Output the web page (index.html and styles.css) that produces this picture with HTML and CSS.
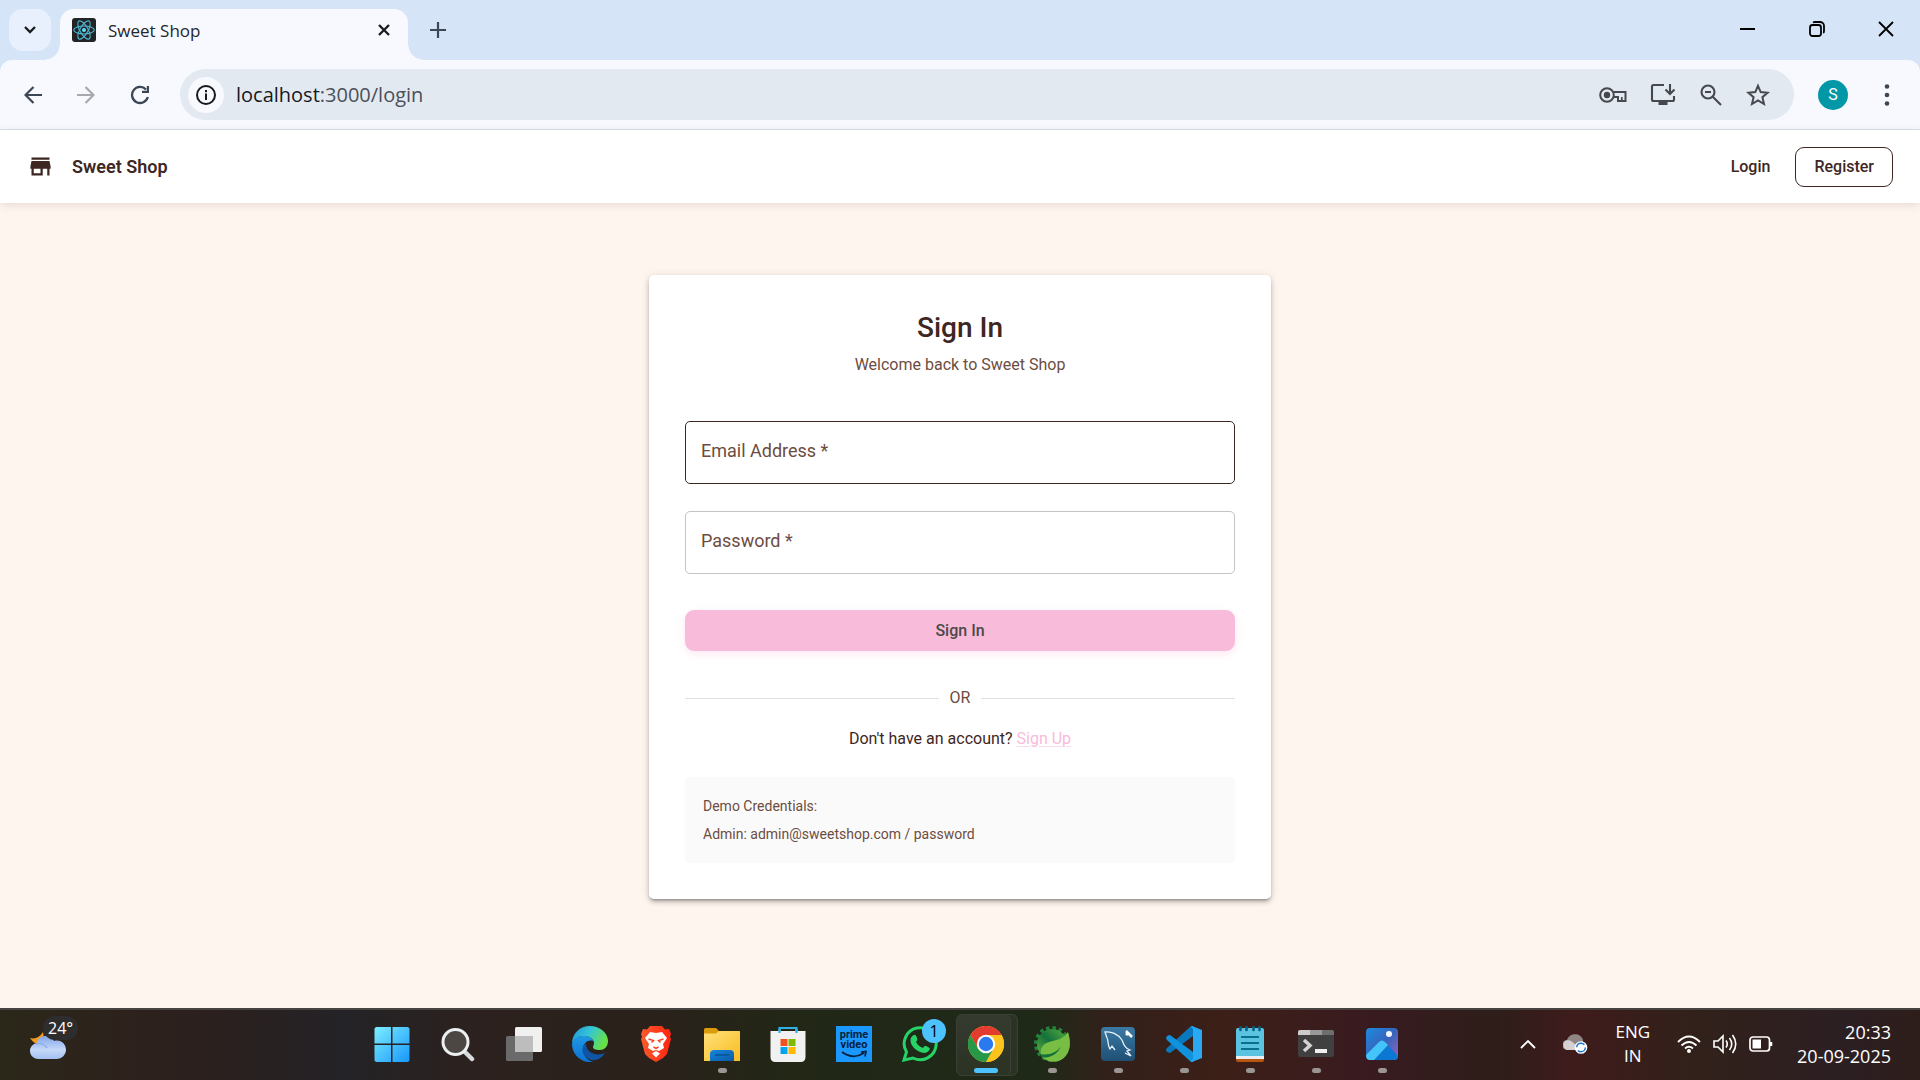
FILE: index.html
```html
<!DOCTYPE html>
<html lang="en">
<head>
<meta charset="utf-8">
<title>Sweet Shop</title>
<link rel="stylesheet" href="styles.css">
</head>
<body>
<header class="browser">
  <div class="tabstrip">
    <button class="tab-search" aria-label="Search tabs"><svg width="14" height="10" viewBox="0 0 14 10"><path d="M2 2l5 5 5-5" fill="none" stroke="#1b1d21" stroke-width="2.4"/></svg></button>
    <div class="tab">
      <svg class="favicon" width="24" height="24" viewBox="0 0 24 24"><rect width="24" height="24" rx="3" fill="#212325"/><g fill="none" stroke="#4fb9d6" stroke-width="1.1"><ellipse cx="12" cy="12" rx="10.3" ry="4"/><ellipse cx="12" cy="12" rx="10.3" ry="4" transform="rotate(60 12 12)"/><ellipse cx="12" cy="12" rx="10.3" ry="4" transform="rotate(120 12 12)"/></g><circle cx="12" cy="12" r="2" fill="#61dafb"/></svg>
      <span class="tab-title">Sweet Shop</span>
      <button class="tab-close" aria-label="Close tab"><svg width="12" height="12" viewBox="0 0 12 12"><path d="M1 1l10 10M11 1L1 11" stroke="#1b1d21" stroke-width="2.4"/></svg></button>
    </div>
    <button class="new-tab" aria-label="New tab"><svg width="16" height="16" viewBox="0 0 16 16"><path d="M8 0v16M0 8h16" stroke="#3c4756" stroke-width="2.2"/></svg></button>
    <div class="window-controls">
      <button aria-label="Minimize"><svg width="16" height="16" viewBox="0 0 16 16"><path d="M0 8h15" stroke="#000" stroke-width="2"/></svg></button>
      <button aria-label="Restore"><svg width="16" height="16" viewBox="0 0 16 16"><g fill="none" stroke="#000" stroke-width="1.8"><rect x="1" y="4" width="11" height="11" rx="2.5"/><path d="M4 1.6Q4.800 1 6 1h5a4 4 0 0 1 4 4v5q0 1.500-.8 2"/></g></svg></button>
      <button aria-label="Close"><svg width="16" height="16" viewBox="0 0 16 16"><path d="M1 1l14 14M15 1L1 15" stroke="#000" stroke-width="1.8"/></svg></button>
    </div>
  </div>
  <div class="toolbar">
    <nav class="nav-buttons">
      <button aria-label="Back"><svg width="18" height="18" viewBox="0 0 18 18"><path d="M18 9H2M9.500 1L1.500 9l8 8" fill="none" stroke="#3c4756" stroke-width="2.200"/></svg></button>
      <button aria-label="Forward"><svg width="18" height="18" viewBox="0 0 18 18"><path d="M0 9h16M8.500 1l8 8-8 8" fill="none" stroke="#a6a8ac" stroke-width="2.200"/></svg></button>
      <button aria-label="Reload"><svg width="20" height="20" viewBox="0 0 20 20"><path d="M17.800 12A8 8 0 1 1 16 4.600" fill="none" stroke="#3c4756" stroke-width="2.300"/><path d="M19 1v7h-7V5.800h4.800V1z" fill="#3c4756"/></svg></button>
    </nav>
    <div class="address">
      <button class="site-info" aria-label="Site information"><svg width="20" height="20" viewBox="0 0 20 20"><circle cx="10" cy="10" r="9" fill="none" stroke="#17191d" stroke-width="2"/><path d="M10 8.500V15M10 5v2.200" stroke="#17191d" stroke-width="2"/></svg></button>
      <div class="url"><b>localhost</b>:3000/login</div>
      <div class="address-actions">
        <svg width="28" height="24" viewBox="0 0 28 24"><circle cx="8" cy="12" r="6.800" fill="none" stroke="#46484d" stroke-width="2"/><circle cx="8" cy="12" r="3.200" fill="#46484d"/><path d="M14 9h12.500v9h-7.500v-4h-5" fill="none" stroke="#46484d" stroke-width="2"/><path d="M22.800 18v-4" stroke="#46484d" stroke-width="1.700"/></svg>
        <svg width="26" height="24" viewBox="0 0 26 24"><path d="M14 2H3.500A1.500 1.500 0 0 0 2 3.500v13A1.500 1.500 0 0 0 3.500 18h19a1.500 1.500 0 0 0 1.500-1.500V13M20 1v9.500M15.500 6.500L20 11l4.500-4.500" fill="none" stroke="#46484d" stroke-width="2.100"/><path d="M8.500 18h9v4h-9z" fill="#46484d"/></svg>
        <svg width="24" height="24" viewBox="0 0 24 24"><g fill="none" stroke="#46484d" stroke-width="2.100"><circle cx="9" cy="9" r="6.500"/><path d="M13.500 13.500l8.500 8.500M6 9h6"/></g></svg>
        <svg width="24" height="24" viewBox="0 0 24 24"><path d="M12 2.800l2.700 6.300 6.900.6-5.200 4.500 1.600 6.800-6-3.600L6 21l1.600-6.800-5.200-4.500 6.900-.6z" fill="none" stroke="#46484d" stroke-width="2"/></svg>
      </div>
    </div>
    <button class="profile" aria-label="Profile">S</button>
    <button class="menu" aria-label="Menu"><svg width="6" height="22" viewBox="0 0 6 22"><g fill="#3c4756"><circle cx="3" cy="2.500" r="2.300"/><circle cx="3" cy="11" r="2.300"/><circle cx="3" cy="19.500" r="2.300"/></g></svg></button>
  </div>
</header>

<div class="app">
  <header class="appbar">
    <svg class="brand-icon" width="27" height="27" viewBox="0 0 24 24"><path fill="#3e2723" d="M20 4H4v2h16V4zm1 10v-2l-1-5H4l-1 5v2h1v6h10v-6h4v6h2v-6h1zm-9 4H6v-4h6v4z"/></svg>
    <span class="brand">Sweet Shop</span>
    <a class="login-link" href="#">Login</a>
    <a class="register-link" href="#">Register</a>
  </header>
  <main class="page">
    <form class="card">
      <h1 class="title">Sign In</h1>
      <p class="subtitle">Welcome back to Sweet Shop</p>
      <div class="field field-active"><label for="email">Email Address *</label><input id="email" type="email"></div>
      <div class="field"><label for="password">Password *</label><input id="password" type="password"></div>
      <button class="submit" type="button">Sign In</button>
      <div class="divider">OR</div>
      <p class="signup">Don't have an account? <a href="#">Sign Up</a></p>
      <div class="demo"><p>Demo Credentials:</p><p>Admin: admin@sweetshop.com / password</p></div>
    </form>
  </main>
</div>

<footer class="taskbar">
  <div class="weather">
    <svg width="38" height="28" viewBox="0 0 38 28"><defs><linearGradient id="cloud" x2="0" y2="1"><stop offset="0" stop-color="#7fa5ee"/><stop offset=".6" stop-color="#c5d8f8"/><stop offset="1" stop-color="#a5c1f2"/></linearGradient></defs><path d="M1 6q8 2 13-6 2 8-3 13Q5 12 1 6z" fill="#f39a1e"/><path d="M10 27a8 8 0 0 1-2-16C9 3 21 1 25 9c7-2 12 3 12 9a9 9 0 0 1-9 9z" fill="url(#cloud)"/><path d="M7 12q7-2 11 4" fill="none" stroke="#8fb0ee" stroke-width="1.500"/></svg>
    <span class="temperature">24°</span>
  </div>
  <nav class="tasks">
    <button class="task" aria-label="Start"><svg width="36" height="36" viewBox="0 0 36 36"><defs><linearGradient id="win" x2="1" y2="1"><stop offset="0" stop-color="#7deeff"/><stop offset="1" stop-color="#1697fb"/></linearGradient></defs><path d="M2 1h15v16.500H.5V2.500zM18.500 1H34l1.500 1.500v15h-17zM.5 19H17v17H2L.5 34.500zM18.500 19h17v15.500L34 36H18.500z" fill="url(#win)"/></svg></button>
    <button class="task" aria-label="Search"><svg width="36" height="36" viewBox="0 0 36 36"><path d="M25 26l7 7" stroke="#d5dadd" stroke-width="4.500" stroke-linecap="round"/><circle cx="15.500" cy="16" r="12.500" fill="#4c4743" stroke="#eceff1" stroke-width="3"/></svg></button>
    <button class="task" aria-label="Task view"><svg width="36" height="36" viewBox="0 0 36 36"><rect x="9" y="1" width="27" height="25" rx="1.500" fill="#f0f0f0"/><rect y="10" width="27" height="25" rx="1.500" fill="#6a6a6a"/><path d="M9 10h18v16H9z" fill="#bdbdbd"/></svg></button>
    <button class="task" aria-label="Edge"><svg width="36" height="36" viewBox="0 0 36 36"><defs><linearGradient id="edge1" x2="1" y2=".4"><stop offset="0" stop-color="#1a93d8"/><stop offset=".5" stop-color="#35c4d8"/><stop offset="1" stop-color="#66e04a"/></linearGradient><linearGradient id="edge2" x2="0" y2="1"><stop offset="0" stop-color="#1f9ae5"/><stop offset="1" stop-color="#0b6fd0"/></linearGradient></defs><path d="M0 18C0 7 8 0 18 0s18 7 18 15c0 6-4 9-8 9-5 0-7-1-7-3 0-1 1-2 1-4 0-4-5-7-10-7C6 10 1 13 0 18z" fill="url(#edge1)"/><path d="M0 18C1 12 6 10 12 10c4 0 8 2 9.500 5C15 13 11 18 11 23c0 7 5 12 11 13C10 38 0 29 0 18z" fill="url(#edge2)"/><path d="M14 17c-4 3-5 9-1 13 5 6 14 6 20-3-6 3-19 2-19-10z" fill="#0f55a3"/></svg></button>
    <button class="task" aria-label="Brave"><svg width="36" height="36" viewBox="0 0 36 36"><defs><linearGradient id="brave"><stop offset="0" stop-color="#fb5a2a"/><stop offset="1" stop-color="#ff2512"/></linearGradient></defs><path d="M12 0h12l3 3.500 4-.5 2 5-1 3 1 2-4 15-4 4-7 4-7-4-4-4L3 13l1-2-1-3 2-5 4 .5z" fill="url(#brave)"/><path d="M12 6l6 1 6-1 5 6-4 6 1 4-5 3-3-1-3 1-5-3 1-4-4-6zM18 25l4 2.500-4 4-4-4z" fill="#fff"/><path d="M10.500 13l5 1.500-2 2M25.500 13l-5 1.500 2 2M15.500 21l2.500 1.500 2.500-1.500" fill="none" stroke="#fb4420" stroke-width="1.500"/></svg></button>
    <button class="task running" aria-label="File Explorer"><svg width="36" height="36" viewBox="0 0 36 36"><defs><linearGradient id="fold" x2="1" y2="1"><stop offset="0" stop-color="#ffe07a"/><stop offset="1" stop-color="#f9bd21"/></linearGradient><linearGradient id="fold2" x2="1" y2="1"><stop offset="0" stop-color="#1686dd"/><stop offset="1" stop-color="#0a5ba8"/></linearGradient></defs><path d="M0 10V3.500Q0 2 1.500 2H12l3 3h20v5z" fill="#dc9b0b"/><path d="M0 7.500h12L15 5h20.500q.5 0 .5 1v29H0z" fill="url(#fold)"/><path d="M6 35v-7q0-4 4-4h16q4 0 4 4v7z" fill="url(#fold2)"/><path d="M11 29h14" stroke="#09528f" stroke-width="1.500"/></svg></button>
    <button class="task" aria-label="Store"><svg width="36" height="36" viewBox="0 0 36 36"><path d="M9.500 8V2h17v6" fill="none" stroke="#2fb2e5" stroke-width="2.200"/><path d="M.5 5h35v26q0 5-5 5h-25q-5 0-5-5z" fill="#f1f1f1"/><path d="M9.500 3v4M26.500 3v4" stroke="#2fb2e5" stroke-width="2.200"/><path d="M10.500 13h7v7h-7z" fill="#f25022"/><path d="M18.500 13h7v7h-7z" fill="#7fba00"/><path d="M10.500 21h7v7h-7z" fill="#00a4ef"/><path d="M18.500 21h7v7h-7z" fill="#ffb900"/></svg></button>
    <button class="task" aria-label="Prime Video"><svg width="36" height="36" viewBox="0 0 36 36"><path d="M0 0h36v36H0z" fill="#1a98ff"/><text x="18" y="12" class="prime">prime</text><text x="18" y="22" class="prime">video</text><path d="M6 26q11 8 22 1M25 26l5-.5-1 5" fill="none" stroke="#06213c" stroke-width="1.700"/></svg></button>
    <button class="task" aria-label="WhatsApp"><svg width="36" height="36" viewBox="0 0 36 36"><path d="M2 34l2.500-8A16 16 0 1 1 11 32z" fill="#202a19" stroke="#25d366" stroke-width="3"/><path d="M11 9.500c2-1.500 3-.5 4 2.500.8 2 0 2.500-1 4 1.500 3 4 5 7 6 1.500-2 2-2.500 4-1.500 3 1.500 3.500 2 2 4-2 3-6 3-10 1C12 23 9 19 8.500 15c-.2-2.500.8-4.500 2.500-5.500z" fill="#25d366"/></svg><span class="badge">1</span></button>
    <button class="task running current" aria-label="Chrome"><svg width="36" height="36" viewBox="0 0 36 36"><circle cx="18" cy="18" r="18" fill="#fcc31e"/><path d="M2.400 9A18 18 0 0 1 33.600 9H18L10.200 22.500z" fill="#e33b2e"/><path d="M2.400 9A18 18 0 0 0 18 36l7.800-13.500-15.600 0z" fill="#279847"/><path d="M18 9h15.600A18 18 0 0 1 18 36l7.800-13.500z" fill="#fcc31e"/><circle cx="18" cy="18" r="9.200" fill="#fff"/><circle cx="18" cy="18" r="7.200" fill="#2b79ee"/></svg></button>
    <button class="task running" aria-label="Spring"><svg width="36" height="36" viewBox="0 0 36 36"><defs><linearGradient id="spring" y1="1" x2="1" y2="0"><stop offset="0" stop-color="#6cba3c"/><stop offset=".5" stop-color="#14713c"/><stop offset="1" stop-color="#56ae40"/></linearGradient></defs><circle cx="18" cy="18" r="16" fill="none" stroke="#20843b" stroke-width="4" stroke-dasharray="3.400 2.880"/><circle cx="18" cy="18" r="15" fill="url(#spring)"/><path d="M34 6c4 12 2 24-9 29-7 2-13 0-17-4-3-7 0-13 7-15 8-2 14-3 19-10z" fill="#78be44"/><path d="M6 28c9 2 18-2 21-8-3 8-11 13-20 11z" fill="#137039"/></svg></button>
    <button class="task running" aria-label="MySQL Workbench"><svg width="36" height="36" viewBox="0 0 36 36"><defs><linearGradient id="sql" x2="0" y2="1"><stop offset="0" stop-color="#397aa4"/><stop offset="1" stop-color="#204f74"/></linearGradient></defs><rect x="1" y="1" width="34" height="34" rx="4" fill="url(#sql)"/><path d="M15 24l-3-4-2 3c-3-4-1-8-3-11L5 6c6-1 13 2 17 8 2 5 3 8 8 10l-3 1 4 5-6-3" fill="none" stroke="#e7f1f7" stroke-width="1.300"/><path d="M26 5l2 2-2 2M28 7l4 4" stroke="#fff" stroke-width="2.600" fill="none"/></svg></button>
    <button class="task running" aria-label="Visual Studio Code"><svg width="36" height="36" viewBox="0 0 36 36"><path d="M0 23q0 2 1 3l3 1L27 10V0h-2z" fill="#0a78bd"/><path d="M0 12q1-3 4-3l23 17v10h-2L1 14z" fill="#1092dc"/><path d="M26 0l10 4v28l-10 4q-1 0-1-1l2-2V3l-2-2z" fill="#2aa9f3"/></svg></button>
    <button class="task running" aria-label="Notepad"><svg width="36" height="36" viewBox="0 0 36 36"><path d="M4 29h28v5q0 2-2 2H6q-2 0-2-2z" fill="#b85610"/><path d="M4 28h28v5H4z" fill="#e9eef2"/><path d="M4 4q0-2 2-2h24q2 0 2 2v26H4z" fill="#5bc3e0"/><path d="M9 11h18M9 17h18M9 23h18" stroke="#06708f" stroke-width="2"/><path d="M8.500 1v3M14.500 1v3M21.500 1v3M27.500 1v3" stroke="#086182" stroke-width="2.600" stroke-linecap="round"/></svg></button>
    <button class="task running" aria-label="Terminal"><svg width="36" height="36" viewBox="0 0 36 36"><rect y="4" width="36" height="27" rx="2" fill="#404040"/><path d="M0 9V6q0-2 2-2h10v5z" fill="#ccc"/><path d="M12 4h12v5H12z" fill="#999"/><path d="M24 4h10q2 0 2 2v3H24z" fill="#6e6e6e"/><path d="M6 14l6 5.500L6 25" fill="none" stroke="#d3d3d3" stroke-width="3.500"/><path d="M17 23h12v4H17z" fill="#f0f0f0"/></svg></button>
    <button class="task running" aria-label="Photos"><svg width="36" height="36" viewBox="0 0 36 36"><defs><linearGradient id="photo" x2="1" y2="1"><stop offset="0" stop-color="#1b8be0"/><stop offset=".5" stop-color="#3764bd"/><stop offset="1" stop-color="#9a62bb"/></linearGradient></defs><rect x="2" y="2" width="32" height="32" rx="4" fill="url(#photo)"/><path d="M10 34l12-17 12 13q0 4-4 4z" fill="#0d78d3"/><path d="M2 29l13-13q3-3 6 0l3 3L10 34H6q-4 0-4-5z" fill="#43c5fa"/><circle cx="25" cy="8" r="3" fill="#f5f7fb"/></svg></button>
  </nav>
  <div class="tray">
    <svg class="tray-chevron" width="16" height="10" viewBox="0 0 16 10"><path d="M1 9l7-7 7 7" fill="none" stroke="#fff" stroke-width="1.900"/></svg>
    <svg class="tray-cloud" width="25" height="20" viewBox="0 0 25 20"><path d="M4 16a5 5 0 0 1 0-10C7-2 18-1 20 6v8z" fill="#8e8584"/><path d="M4 16a5 5 0 1 1 4-9l8 6v3z" fill="#d5d1d0"/><circle cx="18" cy="13.500" r="6.300" fill="#fff"/><circle cx="18" cy="13.500" r="4.300" fill="none" stroke="#1a77d2" stroke-width="1.500" stroke-dasharray="10 3.500"/></svg>
    <div class="language">ENG<br>IN</div>
    <div class="status">
      <svg width="24" height="20" viewBox="0 0 24 20"><g fill="none" stroke="#fff" stroke-width="1.800"><path d="M1 8Q12-3 23 8M4.500 11.500q7.500-7 15 0M8 14.500q4-3.500 8 0"/></g><circle cx="12" cy="17" r="2" fill="#fff"/></svg>
      <svg width="24" height="20" viewBox="0 0 24 20"><g fill="none" stroke="#fff" stroke-width="1.600"><path d="M1 7h4l5-5v16l-5-5H1zM13 6.500q2.500 3.500 0 7M16.500 4q4.500 6 0 12M19.500 1q6.500 9 0 18"/></g></svg>
      <svg width="24" height="20" viewBox="0 0 24 20"><rect x="1" y="3" width="19.500" height="14" rx="3" fill="none" stroke="#fff" stroke-width="1.700"/><path d="M3.500 5.500h8.500v9H3.500z" fill="#fff"/><path d="M22 8v4" stroke="#fff" stroke-width="2.500"/></svg>
    </div>
    <div class="clock">20:33<br>20-09-2025</div>
  </div>
</footer>
</body>
</html>
```
FILE: styles.css
```css
* { box-sizing: border-box; }
body { margin: 0; min-height: 100vh; display: flex; flex-direction: column; font-family: Roboto, sans-serif; color: #3e2723; }
h1, p { margin: 0; }
button { border: 0; padding: 0; background: none; font: inherit; color: inherit; display: flex; align-items: center; justify-content: center; }
svg { display: block; flex: none; }

/* Browser frame */
.browser { background: #d5e4f7; font-family: "Open Sans", sans-serif; }
.tabstrip { display: flex; height: 60px; padding: 9px 0 0 9px; }
.tab-search { width: 42px; height: 42px; border-radius: 14px; background: #e8f0fe; }
.tab { position: relative; display: flex; align-items: center; width: 348px; margin-left: 9px; padding: 0 18px 9px 12px; background: #f8f9fe; border-radius: 14px 14px 0 0; }
.tab::before, .tab::after { content: ""; position: absolute; bottom: 0; width: 15px; height: 15px; }
.tab::before { left: -15px; background: radial-gradient(circle at 0 0, transparent 14px, #f8f9fe 15px); }
.tab::after { right: -15px; background: radial-gradient(circle at 100% 0, transparent 14px, #f8f9fe 15px); }
.tab-title { flex: 1; margin-left: 12px; font-size: 17px; line-height: 20px; color: #24272c; padding-top: 2px; }
.new-tab { width: 42px; height: 42px; margin-left: 9px; }
.window-controls { display: flex; height: 42px; margin-left: auto; }
.window-controls button { width: 69px; height: 40px; }
.toolbar { display: flex; align-items: center; height: 70px; padding: 0 28px 0 24px; background: #f8f9fe; border-bottom: 1px solid #dbe2ec; border-radius: 12px 12px 0 0; }
.nav-buttons { display: flex; align-items: center; gap: 35px; width: 156px; }
.address { flex: 1; display: flex; align-items: center; height: 51px; padding: 0 24px 0 8px; border-radius: 26px; background: #e3e9f1; }
.site-info { width: 36px; height: 36px; border-radius: 50%; background: #f8f9fe; }
.url { flex: 1; margin-left: 12px; font-size: 20px; line-height: 28px; color: #4b5059; }
.url b { font-weight: 400; color: #17191d; }
.address-actions { display: flex; align-items: center; gap: 23px; }
.profile { width: 30px; height: 30px; margin-left: 24px; border-radius: 50%; background: #0097a7; color: #fff; font: 16px/20px Roboto, sans-serif; }
.menu { width: 10px; height: 30px; margin-left: 34px; }

/* Web app */
.app { flex: 1; display: flex; flex-direction: column; background: #fff5ef; }
.appbar { display: flex; align-items: center; height: 73px; padding: 0 27px; background: #fff; box-shadow: 0 2px 9px rgba(62, 60, 35, .13); }
.brand { flex: 1; margin-left: 18px; font-size: 18px; line-height: 28px; font-weight: 600; }
.appbar a { font-size: 16px; line-height: 22px; font-weight: 500; color: inherit; text-decoration: none; }
.appbar .register-link { margin-left: 25px; padding: 8px 18px; border: 1px solid #3e2723; border-radius: 9px; }
.page { flex: 1; padding: 72px 24px 108px; }
.card { width: 100%; max-width: 622px; margin: 0 auto; padding: 36px; background: #fff; border-radius: 5px; box-shadow: 0 3px 3px -2px rgba(0, 0, 0, .3), 0 3px 5px rgba(0, 0, 0, .2), 0 1px 10px rgba(0, 0, 0, .1); }
.title { font-size: 28px; line-height: 34px; font-weight: 500; text-align: center; }
.subtitle { margin: 8px 0 44px; font-size: 16px; line-height: 24px; text-align: center; color: #6d4c41; }
.field { display: grid; margin-bottom: 27px; }
.field > * { grid-area: 1 / 1; }
.field label { z-index: 1; align-self: center; justify-self: start; padding: 0 0 4px 16px; font-size: 18px; line-height: 26px; color: #6d4c41; }
.field input { width: 100%; height: 63px; padding: 18px 16px; border: 1px solid #c4c4c4; border-radius: 5px; background: #fff; font: inherit; }
.field-active input { border-color: #3e2723; }
.submit { width: 100%; height: 41px; margin-top: 36px; border-radius: 9px; background: #f8bbd9; box-shadow: 0 3px 9px rgba(248, 187, 217, .35); color: #4a4a4a; font-size: 16px; line-height: 24px; font-weight: 500; }
.divider { display: flex; align-items: center; gap: 11px; margin: 35px 0 17px; font-size: 16px; line-height: 24px; color: #6d4c41; }
.divider::before, .divider::after { content: ""; flex: 1; height: 1px; background: #e0e0e0; }
.signup { font-size: 16px; line-height: 24px; text-align: center; }
.signup a { color: #f8bbd9; text-decoration-color: #fbdcec; text-underline-offset: 2px; }
.demo { margin-top: 26px; padding: 18px; border-radius: 4px; background: #fafafa; font-size: 14px; line-height: 22px; color: #6d4c41; }
.demo p + p { margin-top: 6px; }

/* Taskbar */
.taskbar { display: grid; grid-template-columns: 359px 1fr auto; align-items: center; height: 72px; padding-bottom: 2px; border-top: 2px solid #474341; background: linear-gradient(90deg, #2b2719 0, #2d211d 8%, #2a201f 12%, #242327 18%, #2c211e 25%, #2a211b 34%, #222716 41%, #1f2918 54%, #33201a 58%, #3c1f17 64%, #391b20 71%, #2e1e1a 78%, #3f1b1c 82%, #32211a 88%, #2c1f23 96%, #2e1e1a); color: #fff; font-family: "Open Sans", sans-serif; }
.weather { position: relative; width: 38px; margin-left: 29px; padding-top: 4px; }
.temperature { position: absolute; left: 14px; top: -12px; padding: 0 5px; border-radius: 12px; background: #2d2d2d; font-size: 16px; line-height: 24px; }
.tasks { display: flex; }
.task { position: relative; width: 66px; height: 60px; }
.running::after { content: ""; position: absolute; left: 29px; bottom: 1px; width: 9px; height: 5px; border-radius: 3px; background: #9b9693; }
.current::before { content: ""; position: absolute; left: 3px; top: 0; width: 60px; height: 60px; border: 1px solid #3b4036; border-radius: 6px; background: linear-gradient(#353a2f, #2b3324); box-shadow: inset -6px 0 #2b3325, inset -7px 0 #3b4036; }
.current svg { position: relative; }
.current::after { left: 21px; width: 24px; background: #4cc2ff; }
.badge { position: absolute; left: 35px; top: 5px; width: 24px; height: 24px; border-radius: 50%; background: #4cc2ff; color: #000; font-size: 16px; line-height: 24px; }
.prime { font: 700 11px Roboto, sans-serif; fill: #06213c; text-anchor: middle; }
.tray { display: flex; align-items: center; padding-right: 29px; font-size: 17px; line-height: 24px; }
.tray-cloud { margin-left: 27px; }
.language { margin-left: 27px; text-align: center; }
.status { display: flex; gap: 12px; margin: 0 24px 0 27px; }
.clock { text-align: right; font-size: 18px; }
```
